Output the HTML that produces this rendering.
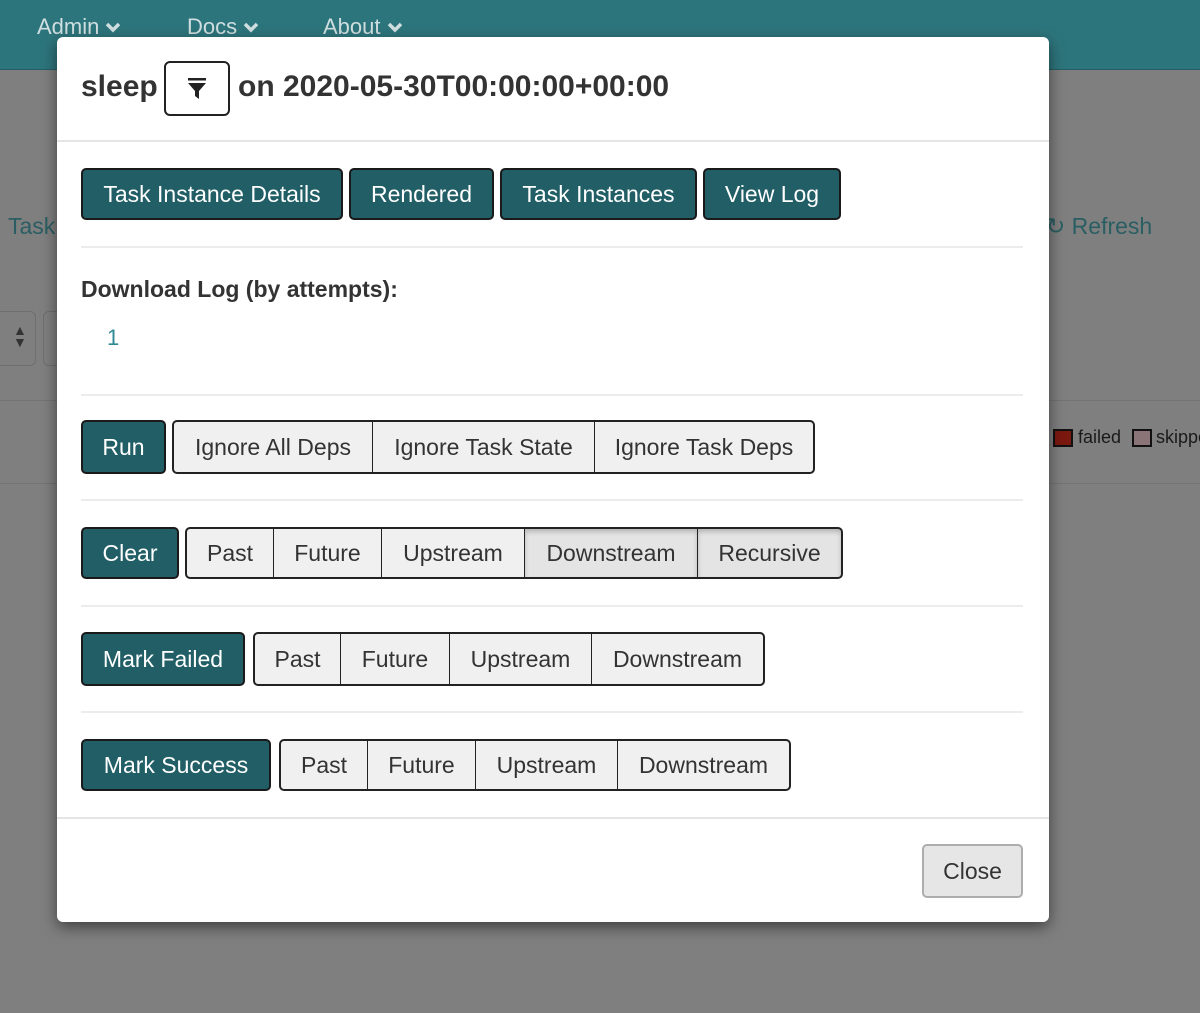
<!DOCTYPE html>
<html><head><style>
*{box-sizing:border-box;margin:0;padding:0}
body{width:1200px;height:1013px;background:#7f7f7f;font-family:"Liberation Sans",sans-serif;position:relative;overflow:hidden}
.a{position:absolute}
.nav{left:0;top:0;width:1200px;height:70px;background:#2d757c;border-bottom:1px solid #245f66}
.nav span{position:absolute;top:14px;color:#d0dfe1;font-size:22px;display:flex;align-items:center;gap:6px}
.modal{left:57px;top:37px;width:992px;height:885px;background:#fff;border-radius:6px;box-shadow:0 5px 15px rgba(0,0,0,.5)}
.hr{position:absolute;left:24px;width:942px;height:2px;background:#ececec}
.b{position:absolute;display:flex;align-items:center;justify-content:center;font-size:23px;height:52px;white-space:nowrap}
.p{background:#215e66;color:#fff;border:2px solid #1a1a1a;border-radius:5px}
.g{background:#f0f0f0;color:#333;border:2px solid #222;border-left-width:1px;border-right-width:1px}
.g.f{border-left-width:2px;border-radius:5px 0 0 5px}
.g.l{border-right-width:2px;border-radius:0 5px 5px 0}
.g.s{box-shadow:inset 0 3px 5px rgba(0,0,0,.2);background:#e4e4e4}
</style></head><body>
<div class="a nav">
<span style="left:37px">Admin <svg width="16" height="12" viewBox="0 0 16 12"><path d="M2 3 L8 9 L14 3" stroke="#d0dfe1" stroke-width="3.5" fill="none"/></svg></span>
<span style="left:187px">Docs <svg width="16" height="12" viewBox="0 0 16 12"><path d="M2 3 L8 9 L14 3" stroke="#d0dfe1" stroke-width="3.5" fill="none"/></svg></span>
<span style="left:323px">About <svg width="16" height="12" viewBox="0 0 16 12"><path d="M2 3 L8 9 L14 3" stroke="#d0dfe1" stroke-width="3.5" fill="none"/></svg></span></div>
<div class="a" style="left:8px;top:213px;font-size:23px;color:#2a5e63">Task</div>
<div class="a" style="left:1046px;top:213px;font-size:23px;color:#2a5e63">↻ Refresh</div>
<div class="a" style="left:-10px;top:311px;width:46px;height:55px;border:1px solid #6e6e6e;border-radius:6px;color:#333;font-size:14px;padding:12px 0 0 22px;line-height:12px">▲<br>▼</div>
<div class="a" style="left:43px;top:311px;width:30px;height:55px;border:1px solid #6e6e6e;border-radius:6px"></div>
<div class="a" style="left:0;top:400px;width:1200px;height:1px;background:#747474"></div>
<div class="a" style="left:0;top:483px;width:1200px;height:1px;background:#747474"></div>
<div class="a" style="left:1053px;top:429px;width:20px;height:18px;background:#7b1810;border:2px solid #111"></div>
<div class="a" style="left:1078px;top:427px;font-size:18px;color:#1a1a1a">failed</div>
<div class="a" style="left:1132px;top:429px;width:20px;height:18px;background:#8a7478;border:2px solid #111"></div>
<div class="a" style="left:1156px;top:427px;font-size:18px;color:#1a1a1a">skipped</div>

<div class="a modal">
<div class="a" style="left:24px;top:33px;font-size:30px;font-weight:bold;color:#333">sleep</div>
<div class="a" style="left:107px;top:24px;width:66px;height:55px;border:2px solid #222;border-radius:6px;display:flex;align-items:center;justify-content:center">
<svg width="20" height="24" viewBox="0 0 20 24"><rect x="1" y="1" width="18" height="2.5" fill="#222"/><path d="M1 6 H19 L12 14 V22 L8 19 V14 Z" fill="#222"/></svg></div>
<div class="a" style="left:181px;top:33px;font-size:30px;font-weight:bold;color:#333">on 2020-05-30T00:00:00+00:00</div>
<div class="a" style="left:0;top:103px;width:992px;height:2px;background:#e5e5e5"></div>

<div class="b p" style="left:24px;top:131px;width:262px">Task Instance Details</div>
<div class="b p" style="left:292px;top:131px;width:145px">Rendered</div>
<div class="b p" style="left:443px;top:131px;width:197px">Task Instances</div>
<div class="b p" style="left:646px;top:131px;width:138px">View Log</div>
<div class="hr" style="top:209px"></div>
<div class="a" style="left:24px;top:239px;font-size:23px;font-weight:bold;color:#333">Download Log (by attempts):</div>
<div class="a" style="left:50px;top:288px;font-size:22px;color:#2d8a94">1</div>
<div class="hr" style="top:357px"></div>

<div class="b p" style="left:24px;top:383px;width:85px;height:54px">Run</div>
<div class="b g f" style="left:115px;top:383px;width:201px;height:54px">Ignore All Deps</div>
<div class="b g" style="left:315px;top:383px;width:223px;height:54px">Ignore Task State</div>
<div class="b g l" style="left:537px;top:383px;width:221px;height:54px">Ignore Task Deps</div>
<div class="hr" style="top:462px"></div>

<div class="b p" style="left:24px;top:490px;width:98px">Clear</div>
<div class="b g f" style="left:128px;top:490px;width:89px">Past</div>
<div class="b g" style="left:216px;top:490px;width:109px">Future</div>
<div class="b g" style="left:324px;top:490px;width:144px">Upstream</div>
<div class="b g s" style="left:467px;top:490px;width:174px">Downstream</div>
<div class="b g s l" style="left:640px;top:490px;width:146px">Recursive</div>
<div class="hr" style="top:568px"></div>

<div class="b p" style="left:24px;top:595px;width:164px;height:54px">Mark Failed</div>
<div class="b g f" style="left:196px;top:595px;width:88px;height:54px">Past</div>
<div class="b g" style="left:283px;top:595px;width:110px;height:54px">Future</div>
<div class="b g" style="left:392px;top:595px;width:143px;height:54px">Upstream</div>
<div class="b g l" style="left:534px;top:595px;width:174px;height:54px">Downstream</div>
<div class="hr" style="top:674px"></div>

<div class="b p" style="left:24px;top:702px;width:190px">Mark Success</div>
<div class="b g f" style="left:222px;top:702px;width:89px">Past</div>
<div class="b g" style="left:310px;top:702px;width:109px">Future</div>
<div class="b g" style="left:418px;top:702px;width:143px">Upstream</div>
<div class="b g l" style="left:560px;top:702px;width:174px">Downstream</div>
<div class="a" style="left:0;top:780px;width:992px;height:2px;background:#e5e5e5"></div>

<div class="b" style="left:865px;top:807px;width:101px;height:54px;background:#e6e6e6;border:2px solid #adadad;border-radius:5px;color:#333">Close</div>
</div>
</body></html>
